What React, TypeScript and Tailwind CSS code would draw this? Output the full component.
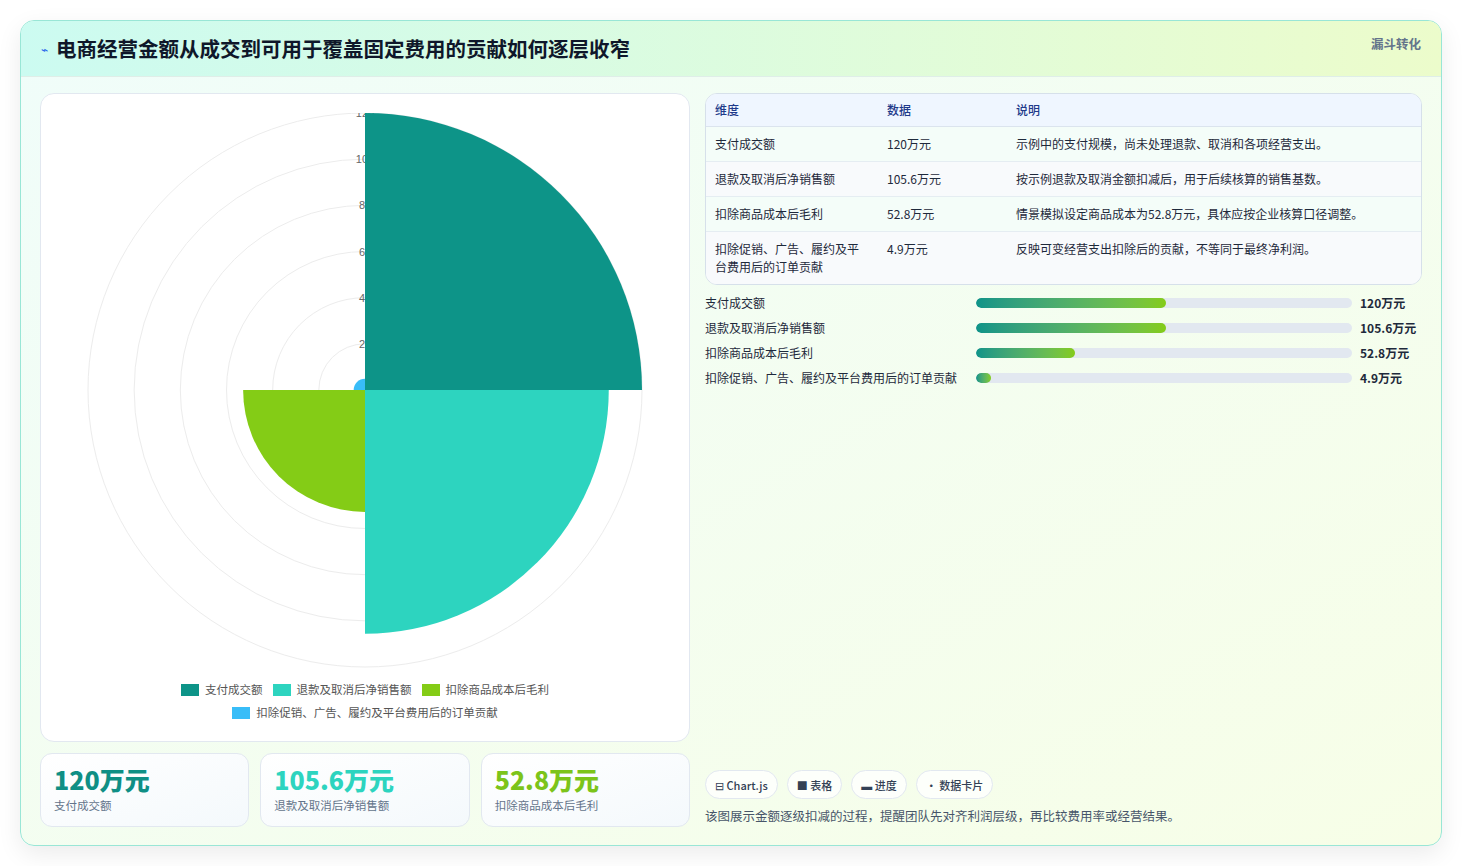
import React from "react";

const CX = 324, CY = 277, Rmax = 277;
const r = (v: number) => (v / 120) * Rmax;
function sector(rad: number, a0: number, a1: number) {
  const p = (a: number) => {
    const t = ((a - 90) * Math.PI) / 180;
    return [CX + rad * Math.cos(t), CY + rad * Math.sin(t)];
  };
  const [x0, y0] = p(a0);
  const [x1, y1] = p(a1);
  return `M${CX},${CY} L${x0},${y0} A${rad},${rad} 0 0 1 ${x1},${y1} Z`;
}

const rows = [
  ["支付成交额", "120万元", "示例中的支付规模，尚未处理退款、取消和各项经营支出。"],
  ["退款及取消后净销售额", "105.6万元", "按示例退款及取消金额扣减后，用于后续核算的销售基数。"],
  ["扣除商品成本后毛利", "52.8万元", "情景模拟设定商品成本为52.8万元，具体应按企业核算口径调整。"],
  ["扣除促销、广告、履约及平台费用后的订单贡献", "4.9万元", "反映可变经营支出扣除后的贡献，不等同于最终净利润。"],
];
const bars: [string, string, number][] = [
  ["支付成交额", "120万元", 190],
  ["退款及取消后净销售额", "105.6万元", 190],
  ["扣除商品成本后毛利", "52.8万元", 99],
  ["扣除促销、广告、履约及平台费用后的订单贡献", "4.9万元", 15],
];

export default function App() {
  const font = { fontFamily: '"Noto Sans CJK SC","Noto Sans",sans-serif' };
  return (
    <div className="w-[1462px] h-[866px] bg-white p-[20px]" style={font}>
      <div className="w-[1422px] h-[826px] rounded-[14px] border border-[#99e6d6] overflow-hidden flex flex-col bg-gradient-to-br from-[#f0fdfa] to-[#f7fee7] shadow-[0_8px_24px_rgba(0,0,0,0.08)]">
        <div className="h-[56px] shrink-0 flex items-center justify-between px-[20px] bg-gradient-to-r from-[#ccfbf1] to-[#ecfccb] border-b border-[#dfeee8]">
          <div className="flex items-center gap-[8px]">
            <span className="text-[#2563eb] text-[12px]">⌁</span>
            <span className="text-[20.5px] font-bold text-[#0f172a]">电商经营金额从成交到可用于覆盖固定费用的贡献如何逐层收窄</span>
          </div>
          <span className="text-[12.5px] font-bold text-[#64748b] self-start mt-[14px]">漏斗转化</span>
        </div>
        <div className="flex-1 flex gap-[15px] px-[19px] pt-[16px] pb-[18px]">
          <div className="w-[650px] flex flex-col gap-[11px]">
            <div className="h-[649px] bg-white rounded-[14px] border border-[#e2e8f0] flex flex-col items-center">
              <svg width="648" height="568" viewBox="0 0 648 568" style={{ marginTop: 19 }}>
                {[1, 2, 3, 4, 5, 6].map((i) => (
                  <circle key={i} cx={CX} cy={CY} r={r(i * 20)} fill="none" stroke="#ececec" strokeWidth="1" />
                ))}
                {[20, 40, 60, 80, 100, 120].map((v) => (
                  <text key={v} x={CX} y={CY - r(v) + 4} fontSize="11" fill="#666" textAnchor="middle" fontFamily="Liberation Sans">{v}</text>
                ))}
                <path d={sector(r(4.9), 270, 360)} fill="#38bdf8" />
                <path d={sector(r(120), 0, 90)} fill="#0d9488" />
                <path d={sector(r(105.6), 90, 180)} fill="#2dd4bf" />
                <path d={sector(r(52.8), 180, 270)} fill="#84cc16" />
              </svg>
              <div className="flex flex-col items-center gap-[6px] text-[11.5px] text-[#555]">
                <div className="flex gap-[10px]">
                  {[["#0d9488", "支付成交额"], ["#2dd4bf", "退款及取消后净销售额"], ["#84cc16", "扣除商品成本后毛利"]].map(([c, t]) => (
                    <span key={t} className="flex items-center gap-[6px]"><span className="w-[18px] h-[12px]" style={{ background: c }} />{t}</span>
                  ))}
                </div>
                <span className="flex items-center gap-[6px]"><span className="w-[18px] h-[12px] bg-[#38bdf8]" />扣除促销、广告、履约及平台费用后的订单贡献</span>
              </div>
            </div>
            <div className="flex gap-[11px]">
              {[["120万元", "#0f8f85", "支付成交额"], ["105.6万元", "#2dd4bf", "退款及取消后净销售额"], ["52.8万元", "#7cc41a", "扣除商品成本后毛利"]].map(([v, c, t]) => (
                <div key={t} className="flex-1 h-[74px] rounded-[12px] border border-[#e2e8f0] bg-gradient-to-br from-white to-[#f4f9fc] px-[13px] pt-[10px]">
                  <div className="text-[25px] font-extrabold leading-[30px]" style={{ color: c }}>{v}</div>
                  <div className="text-[11.5px] text-[#64748b] mt-[3px]">{t}</div>
                </div>
              ))}
            </div>
          </div>
          <div className="flex-1 flex flex-col">
            <div className="rounded-[12px] border border-[#d6e0ea] overflow-hidden bg-white text-[12px] text-[#1e293b]">
              <div className="flex h-[33px] items-center bg-[#eff6ff] text-[#1e3a8a] font-medium border-b border-[#dbe4ee]">
                <span className="w-[181px] pl-[9px]">维度</span><span className="w-[129px]">数据</span><span>说明</span>
              </div>
              {rows.map((rw, i) => (
                <div key={i} className={`flex py-[8px] border-b border-[#e5edf2] last:border-b-0 ${i % 2 === 0 ? "bg-[#f4fdf9]" : "bg-[#f8fafc]"}`}>
                  <span className="w-[181px] pl-[9px] pr-[18px] leading-[18px]">{rw[0]}</span>
                  <span className="w-[129px] leading-[18px]">{rw[1]}</span>
                  <span className="leading-[18px]">{rw[2]}</span>
                </div>
              ))}
            </div>
            <div className="flex flex-col gap-[7px] mt-[9px] text-[12px] text-[#1e293b]">
              {bars.map(([t, v, w]) => (
                <div key={t} className="flex items-center h-[18px]">
                  <span className="w-[271px] whitespace-nowrap">{t}</span>
                  <div className="w-[376px] h-[10px] rounded-full bg-[#e2e8f0] overflow-hidden">
                    <div className="h-full rounded-full bg-gradient-to-r from-[#0d9488] to-[#84cc16]" style={{ width: w }} />
                  </div>
                  <span className="ml-[8px] font-bold">{v}</span>
                </div>
              ))}
            </div>
            <div className="flex-1" />
            <div className="flex gap-[9px] text-[11px] font-medium text-[#334155]">
              {["⊟ Chart.js", "■ 表格", "▬ 进度", "• 数据卡片"].map((t) => (
                <span key={t} className="h-[29px] px-[9px] flex items-center rounded-full border border-[#e2e8f0] bg-white/80">{t}</span>
              ))}
            </div>
            <div className="text-[12.5px] text-[#475569] mt-[8px] mb-[1px]">该图展示金额逐级扣减的过程，提醒团队先对齐利润层级，再比较费用率或经营结果。</div>
          </div>
        </div>
      </div>
    </div>
  );
}
